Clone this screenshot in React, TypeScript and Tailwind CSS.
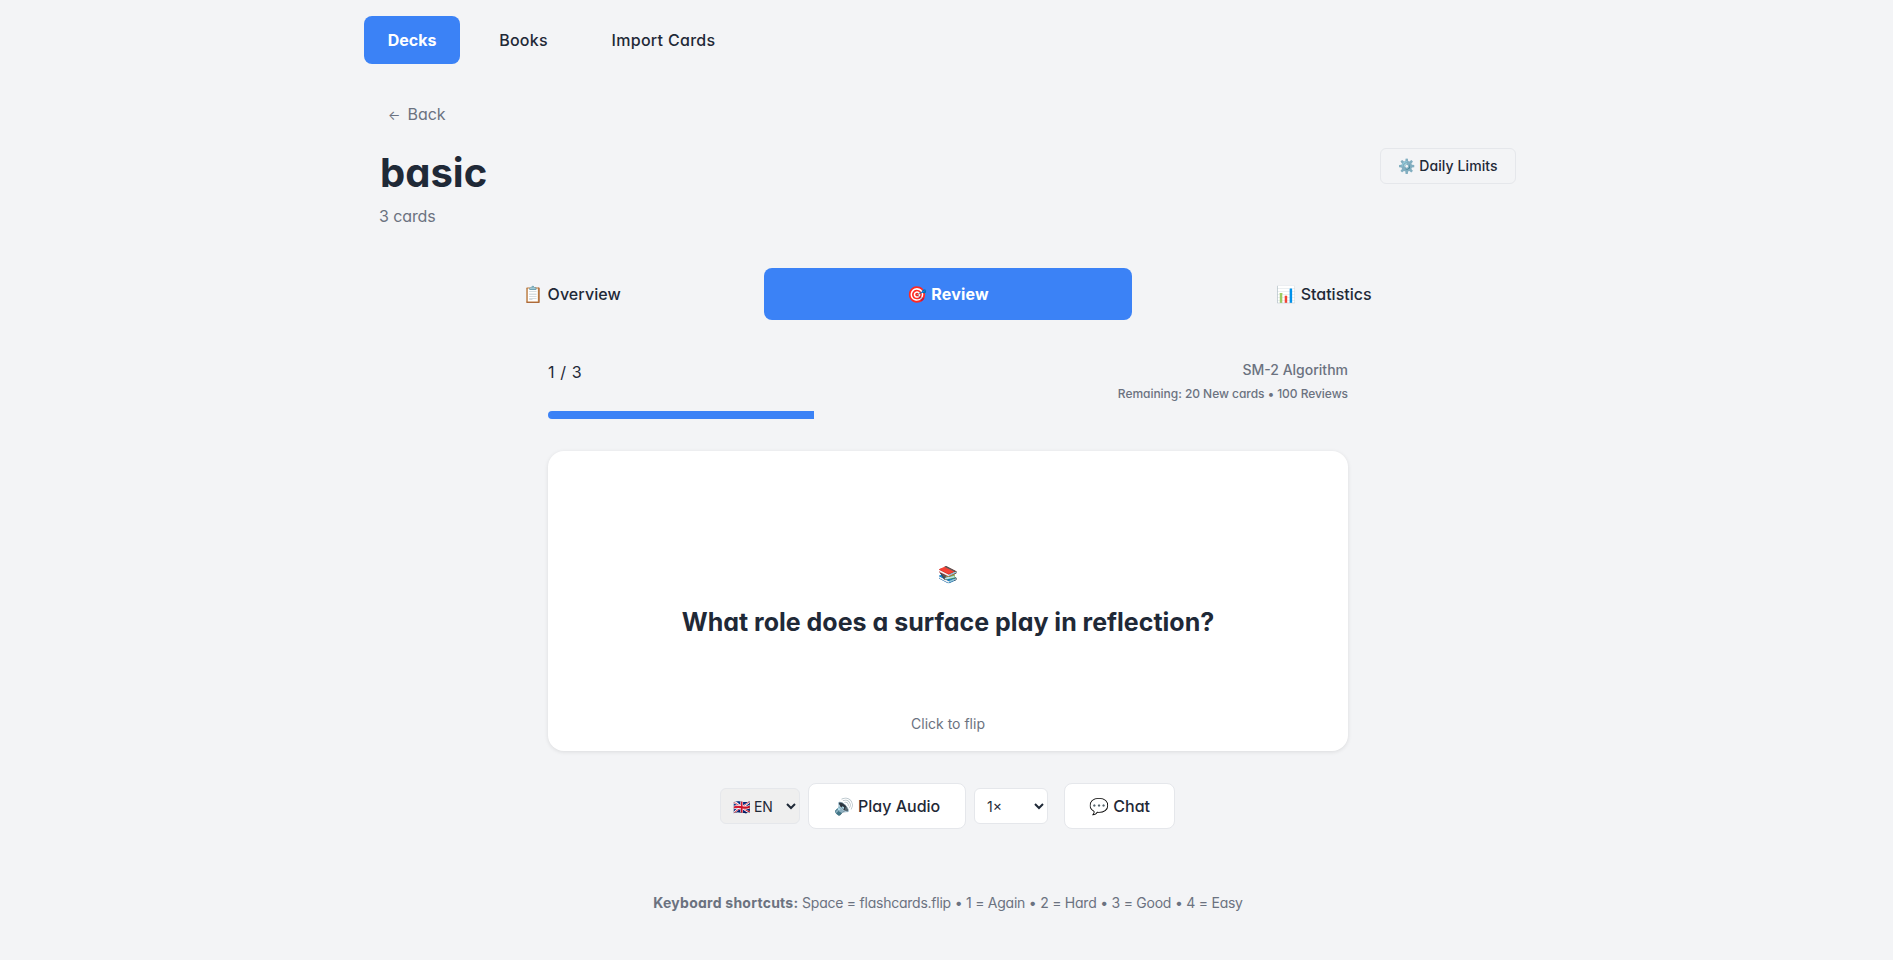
export default function App() {
  return (
    <div className="min-h-[960px] bg-[#f3f4f6] font-['Inter','Noto_Sans',sans-serif] text-[#1f2937] [font-feature-settings:'cv11','ss03']">
      <div className="ml-[348px] w-[1200px]">
        <nav className="flex h-[80px] items-center gap-4 pl-4 text-[16px] font-[450]">
          <button className="h-12 w-24 rounded-lg bg-[#3b82f6] font-bold text-white">Decks</button>
          <button className="h-12 w-[95px] tracking-[0.2px]">Books</button>
          <button className="h-12 w-[153px] tracking-[0.3px]">Import Cards</button>
        </nav>
        <div className="px-8">
          <div className="pl-2 pt-[22px]"><div className="flex h-6 items-baseline gap-[7px] text-[16px] leading-6 text-[#6b7280]"><span className="text-[13px]">←</span><span>Back</span></div></div>
          <div className="mt-[22px] flex items-start justify-between">
            <div>
              <h1 className="text-[40px] leading-[50px] font-bold">basic</h1>
              <p className="-ml-px mt-[6px] text-[16px] leading-6 tracking-[-0.1px] text-[#6b7280]">3 cards</p>
            </div>
            <button className="h-9 w-[136px] rounded-md border border-[#e5e7eb] pb-[2px] text-[14px] font-[450] tracking-[0.1px]">⚙️ Daily Limits</button>
          </div>
          <div className="mx-auto mt-[40px] grid w-[1120px] grid-cols-3 gap-2 text-[16px] font-[450]">
            <button className="h-[52px] rounded-lg tracking-[0.1px]">📋 Overview</button>
            <button className="h-[52px] rounded-lg bg-[#3b82f6] font-bold tracking-[0.2px] text-white">🎯 Review</button>
            <button className="h-[52px] rounded-lg">📊 Statistics</button>
          </div>
          <div className="mx-auto mt-[38px] w-[800px]">
            <div className="flex items-start justify-between">
              <span className="mt-[2px] text-[16px] leading-6 tracking-[0.6px]">1 / 3</span>
              <div className="mt-[1px] text-right text-[#6b7280]">
                <div className="text-[14px] leading-[22px] font-medium">SM-2 Algorithm</div>
                <div className="mt-[3px] text-[12px] leading-5 font-medium tracking-[-0.04px]">Remaining: 20 New cards • 100 Reviews</div>
              </div>
            </div>
            <div className="mt-[7px] h-2 overflow-hidden rounded-full">
              <div className="h-full w-[266px] bg-[#3b82f6]" />
            </div>
            <div className="mt-8 flex h-[300px] flex-col items-center rounded-2xl bg-white pt-[111px] shadow-[0_1px_4px_rgba(0,0,0,0.1)]">
              <div className="text-[16px] leading-6">📚</div>
              <h2 className="mt-[18px] text-[25px] leading-[36px] font-bold">What role does a surface play in reflection?</h2>
              <div className="mt-[74px] text-[14px] leading-5 text-[#6b7280]">Click to flip</div>
            </div>
            <div className="mt-8 flex items-center justify-center pr-[1px]">
              <select className="h-9 w-20 rounded-md border border-[#e5e7eb] bg-[#efefef] pl-2 text-[14px]"><option>🇬🇧 EN</option></select>
              <button className="ml-2 h-[46px] w-[158px] rounded-lg border border-[#e5e7eb] bg-white text-[16px] font-[450]">🔊 Play Audio</button>
              <select className="ml-2 h-9 w-[74px] rounded-md border border-[#e5e7eb] bg-white pl-2 text-[14px]"><option>1×</option></select>
              <button className="ml-4 h-[46px] w-[111px] rounded-lg border border-[#e5e7eb] bg-white text-[16px] font-[450]">💬 Chat</button>
            </div>
            <p className="mt-[64px] text-center text-[14px] leading-5 tracking-[-0.24px] text-[#6b7280]"><b className="tracking-[0.25px]">Keyboard shortcuts:</b> Space = flashcards.flip • 1 = Again • 2 = Hard • 3 = Good • 4 = Easy</p>
          </div>
        </div>
      </div>
    </div>
  );
}
